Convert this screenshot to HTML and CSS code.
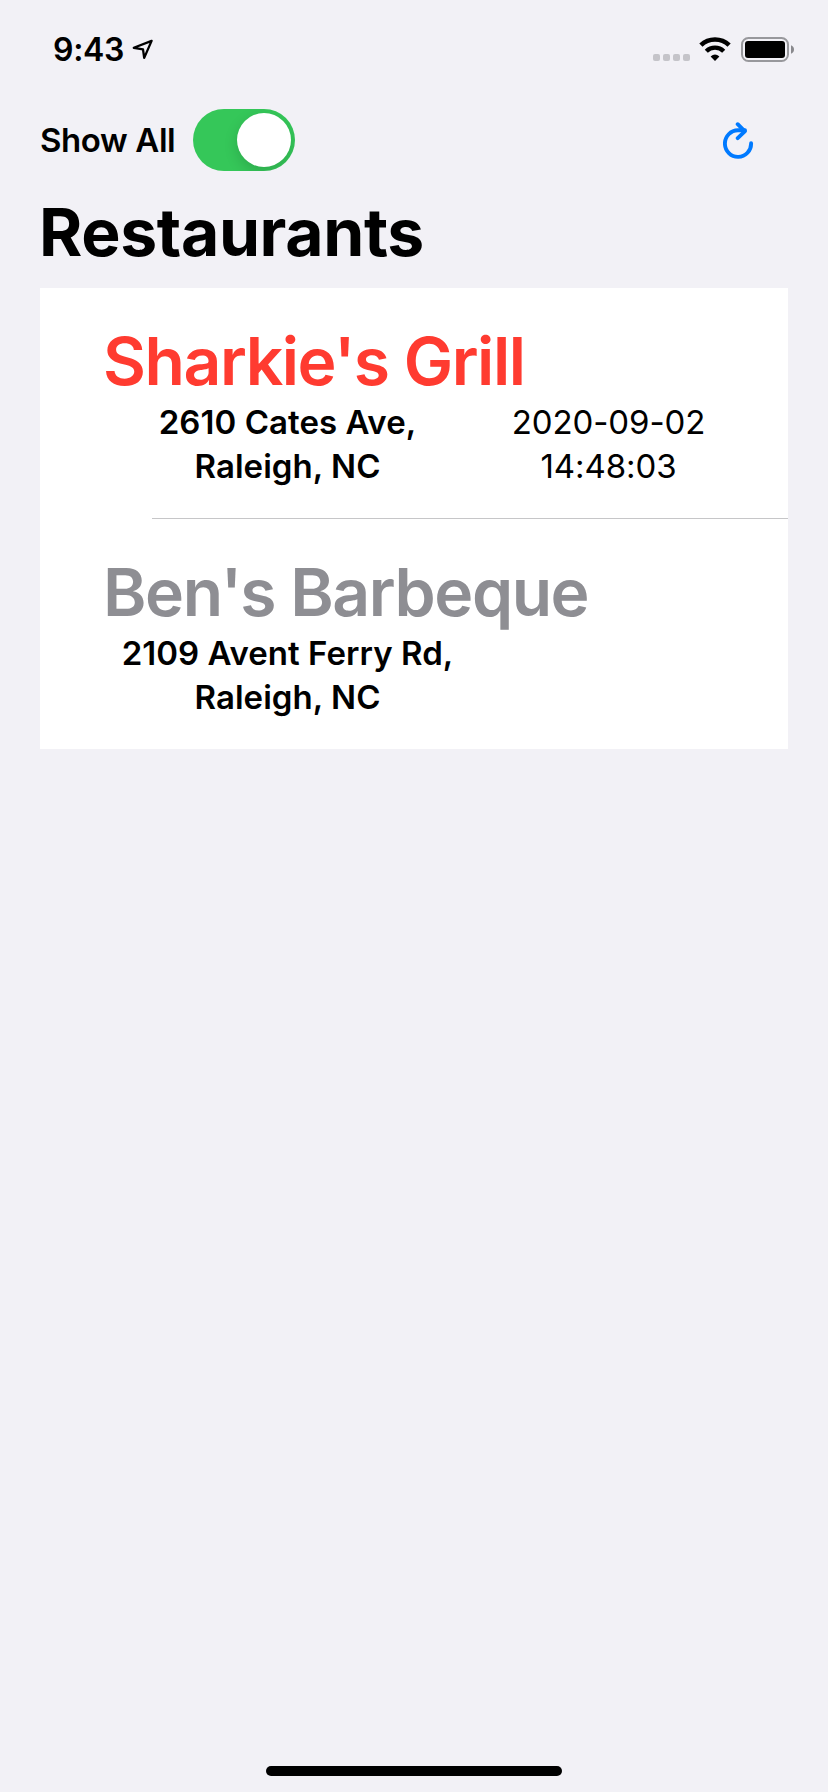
FILE: index.html
```html
<!DOCTYPE html>
<html lang="en">
<head>
<meta charset="utf-8">
<title>Restaurants</title>
<link rel="stylesheet" href="styles.css">
</head>
<body>
<div class="screen">
  <header class="status">
    <span class="time">9:43</span>
    <svg class="location" width="22" height="22" viewBox="0 0 22 22"><path d="M19.6 1.9 1.8 8.8 11 10.3 12.2 18.9Z" fill="none" stroke="#000" stroke-width="2.3" stroke-linejoin="round"/></svg>
    <div class="indicators">
      <div class="cell"><i></i><i></i><i></i><i></i></div>
      <svg class="wifi" width="32" height="24" viewBox="0 0 32 24">
        <g fill="none" stroke="#000">
          <path d="M1.9 8.2A20.2 20.2 0 0 1 30.1 8.2" stroke-width="4.6"/>
          <path d="M7.3 14.2A12.4 12.4 0 0 1 24.7 14.2" stroke-width="4.4"/>
        </g>
        <path d="M16 24 11.6 19.5Q16 15.5 20.4 19.5Z"/>
      </svg>
      <svg class="battery" width="54" height="26" viewBox="0 0 54 26">
        <rect x="1" y="1" width="46" height="23" rx="6.5" fill="none" stroke="#98989c" stroke-width="2"/>
        <rect x="4" y="4" width="40" height="17" rx="3"/>
        <path d="M50 8.3Q53 9.5 53 12.5T50 16.7Z" fill="#89898d"/>
      </svg>
    </div>
  </header>
  <div class="toolbar">
    <span class="label">Show All</span>
    <div class="switch"><div class="knob"></div></div>
    <svg class="refresh" width="32" height="38" viewBox="0 0 32 38"><g fill="none" stroke="#007aff" stroke-width="3.9" stroke-linecap="round" stroke-linejoin="round"><path d="M28.1 21.2A13.1 13.3 0 1 1 15 8.3H22"/><path d="M14.7 2.2 21.8 9.3 14.7 16.1"/></g></svg>
  </div>
  <h1 class="title">Restaurants</h1>
  <main class="list">
    <section class="row">
      <h2 class="name open">Sharkie's Grill</h2>
      <div class="details">
        <p class="address">2610 Cates Ave,<br>Raleigh, NC</p>
        <p class="date">2020-09-02<br>14:48:03</p>
      </div>
    </section>
    <div class="separator"></div>
    <section class="row">
      <h2 class="name muted">Ben's Barbeque</h2>
      <div class="details">
        <p class="address">2109 Avent Ferry Rd,<br>Raleigh, NC</p>
      </div>
    </section>
  </main>
  <div class="home"></div>
</div>
</body>
</html>
```
FILE: styles.css
```css
* { box-sizing: border-box; }
body { margin: 0; font-family: Inter, "Liberation Sans", sans-serif; color: #000; background: #f2f1f6; }
h1, h2, p { margin: 0; }
svg { display: block; }
.screen { display: flex; flex-direction: column; width: 828px; height: 1792px; }
.status { display: flex; align-items: flex-start; height: 88px; padding: 30px 33px 0 53px; }
.time { width: 79px; font-size: 32px; line-height: 40px; font-weight: 600; letter-spacing: -0.3px; }
.location { margin-top: 9px; }
.indicators { display: flex; align-items: flex-start; margin-left: auto; padding-top: 7px; }
.cell { display: flex; gap: 3px; margin: 17px 9px 0 0; }
.cell i { width: 7px; height: 7px; border-radius: 2px; background: #c5c4c9; }
.wifi { margin-right: 10px; }
.toolbar { display: flex; align-items: center; height: 104px; padding: 0 73px 0 40px; }
.label { width: 153px; font-size: 33px; line-height: 44px; font-weight: 600; letter-spacing: -0.4px; white-space: nowrap; }
.switch { display: flex; justify-content: flex-end; width: 102px; height: 62px; padding: 4px; border-radius: 31px; background: #35c759; overflow: hidden; }
.knob { width: 54px; height: 54px; border-radius: 50%; background: #fff; box-shadow: 0 5px 14px rgba(0,0,0,.15); }
.refresh { margin: 2px 0 0 auto; }
.title { margin: 1px 0 17px 39px; font-size: 66px; line-height: 78px; font-weight: 700; letter-spacing: -0.35px; }
.list { margin: 0 40px; background: #fff; }
.row { height: 230px; padding: 34px 62px 30px 64px; }
.name { margin-left: -1px; font-size: 66px; line-height: 78px; font-weight: 600; letter-spacing: -1.45px; white-space: nowrap; }
.open { color: #ff3b30; }
.muted { color: #8e8e93; }
.details { display: flex; gap: 20px; font-size: 33px; line-height: 44px; text-align: center; white-space: nowrap; }
.address { width: 367px; font-weight: 600; letter-spacing: 0.05px; }
.date { width: 235px; font-weight: 400; letter-spacing: -0.1px; }
.separator { height: 1px; margin-left: 112px; background: #c6c6c8; }
.home { width: 296px; height: 10px; margin: auto auto 16px; border-radius: 5px; background: #000; }
```
